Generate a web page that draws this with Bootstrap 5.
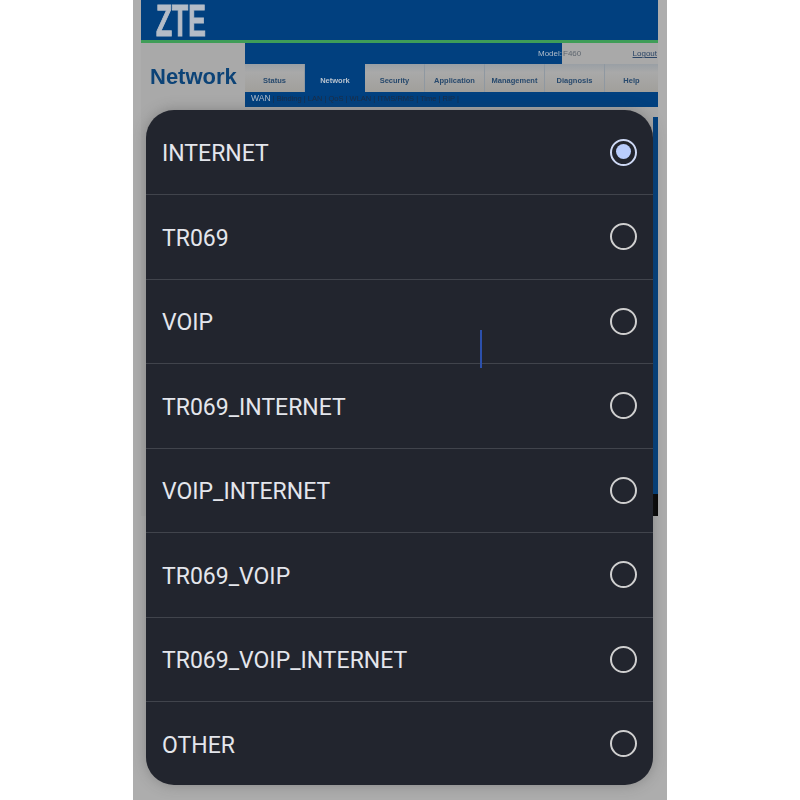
<!DOCTYPE html>
<html lang="en">
<head>
    <meta charset="UTF-8">
    <meta name="viewport" content="width=device-width, initial-scale=1.0">
    <title>WAN service list</title>
    <link href="https://cdn.jsdelivr.net/npm/bootstrap@5.3.2/dist/css/bootstrap.min.css" rel="stylesheet">
    <style>
        html, body { height: 800px; overflow: hidden; background: #fff; }
        .phone-frame {
            position: relative;
            width: 534px;
            height: 800px;
            margin-left: 133px;
            padding-left: 8px;
            padding-right: 9px;
            background: #adadad;
            font-family: "Liberation Sans", Arial, sans-serif;
        }
        .router-page { height: 516px; background: #a3a3a3; filter: blur(.4px); }
        .zte-head { height: 40px; background: #01407f; padding-left: 14px; }
        .zte-logo { display: block; overflow: visible; }
        .zte-logo text { font: bold 44px "Liberation Sans", Arial, sans-serif; fill: #b4bcc7; stroke: #b4bcc7; stroke-width: 1.2px; }
        .zte-green { height: 3px; background: #3f9d58; }
        .router-nav { height: 64px; background: #a9a9a9; }
        .section-title {
            flex: 0 0 104px;
            padding: 20px 0 0 9px;
            color: #0c4377;
            font-size: 22px;
            font-weight: 700;
            line-height: 28px;
        }
        .nav-side { flex: 0 0 413px; min-width: 0; }
        .model-row { height: 21px; font-size: 8px; line-height: 22px; }
        .model-blue { flex: 0 0 317px; background: #01407f; color: #b2bdca; text-align: right; }
        .model-rest { flex: 1; min-width: 0; color: #5f6770; padding-left: 1px; padding-right: 1px; }
        .logout-link { color: #2b4566; text-decoration: underline; }
        .tab-row { height: 28px; }
        .router-tab {
            flex: 0 0 60px;
            text-align: center;
            color: #27496d;
            font-size: 7.5px;
            font-weight: 700;
            line-height: 33px;
            background: linear-gradient(#999fa5, #a9a9a9 30%, #a19f9b);
            border-right: 1px solid #8f98a1;
        }
        .router-tab.tab-on { background: #01407f; color: #b9c3cf; border: 0; }
        .router-tab.tab-last { flex: 1; border: 0; }
        .sub-row {
            height: 15px;
            background: #01407f;
            color: #1e2d45;
            font-size: 7.5px;
            line-height: 13px;
            padding-left: 6px;
            white-space: nowrap;
        }
        .sub-row b { color: #b2bdca; font-weight: 400; font-size: 8.5px; }
        .router-body { height: 409px; background: #a9a9a9; padding-top: 10px; }
        .edge-strip { height: 377px; margin-left: auto; width: 5px; background: #01407f; }
        .edge-black { height: 22px; margin-left: auto; width: 5px; background: #050505; }

        .wan-sheet {
            position: absolute;
            left: 13px;
            top: 110px;
            width: 507px;
            height: 675px;
            background: #22252e;
            border-radius: 28px;
            box-shadow: 0 0 14px rgba(60, 60, 60, .35);
            overflow: hidden;
        }
        .wan-sheet .wan-row {
            flex: 0 0 84.5px;
            padding: 0 16px;
            background: transparent;
            border: 0;
            border-top: 1px solid #41444c;
            border-radius: 0;
            color: #e4e6ec;
            font-family: Roboto, "Liberation Sans", sans-serif;
            font-size: 23px;
        }
        .wan-sheet .wan-row:first-child { flex-basis: 84px; border-top: 0; }
        .wan-label { padding-top: 4px; }
        .radio-dot {
            width: 27px;
            height: 27px;
            border: 2.5px solid #cfcfcf;
            border-radius: 50%;
        }
        .radio-dot.radio-on { border-color: #cdd8f4; padding: 3.5px; }
        .radio-dot.radio-on::before {
            content: "";
            display: block;
            width: 15px;
            height: 15px;
            border-radius: 50%;
            background: #b9cdfd;
        }
        .touch-mark {
            position: absolute;
            left: 347px;
            top: 330px;
            width: 2px;
            height: 38px;
            background: #2c50ac;
        }
    </style>
</head>
<body>
    <div class="phone-frame">
        <!-- router admin page behind the dialog -->
        <div class="router-page">
            <div class="zte-head">
                <svg class="zte-logo" width="70" height="40">
                    <text transform="translate(1 36) scale(.6 1)">ZTE</text>
                </svg>
            </div>
            <div class="zte-green"></div>
            <div class="router-nav d-flex">
                <div class="section-title">Network</div>
                <div class="nav-side">
                    <div class="model-row d-flex">
                        <div class="model-blue">Model:</div>
                        <div class="model-rest d-flex justify-content-between">
                            <span>F460</span>
                            <span class="logout-link">Logout</span>
                        </div>
                    </div>
                    <div class="tab-row d-flex">
                        <div class="router-tab">Status</div>
                        <div class="router-tab tab-on">Network</div>
                        <div class="router-tab">Security</div>
                        <div class="router-tab">Application</div>
                        <div class="router-tab">Management</div>
                        <div class="router-tab">Diagnosis</div>
                        <div class="router-tab tab-last">Help</div>
                    </div>
                    <div class="sub-row"><b>WAN</b> | Binding | LAN | QoS | WLAN | ITMS/RMS | Time | RIP |</div>
                </div>
            </div>
            <div class="router-body">
                <div class="edge-strip"></div>
                <div class="edge-black"></div>
            </div>
        </div>

        <!-- service type dialog -->
        <ul class="list-group wan-sheet" id="wanList"></ul>
        <div class="touch-mark"></div>
    </div>

    <script src="https://cdn.jsdelivr.net/npm/bootstrap@5.3.2/dist/js/bootstrap.bundle.min.js"></script>
    <script>
        const services = ['INTERNET', 'TR069', 'VOIP', 'TR069_INTERNET', 'VOIP_INTERNET', 'TR069_VOIP', 'TR069_VOIP_INTERNET', 'OTHER'];
        const wanList = document.getElementById('wanList');

        services.forEach((name, index) => {
            const row = document.createElement('li');
            row.className = 'list-group-item wan-row d-flex justify-content-between align-items-center';
            row.innerHTML = `<span class="wan-label">${name}</span><span class="radio-dot ${index === 0 ? 'radio-on' : ''}"></span>`;
            wanList.appendChild(row);
        });
    </script>
</body>
</html>
